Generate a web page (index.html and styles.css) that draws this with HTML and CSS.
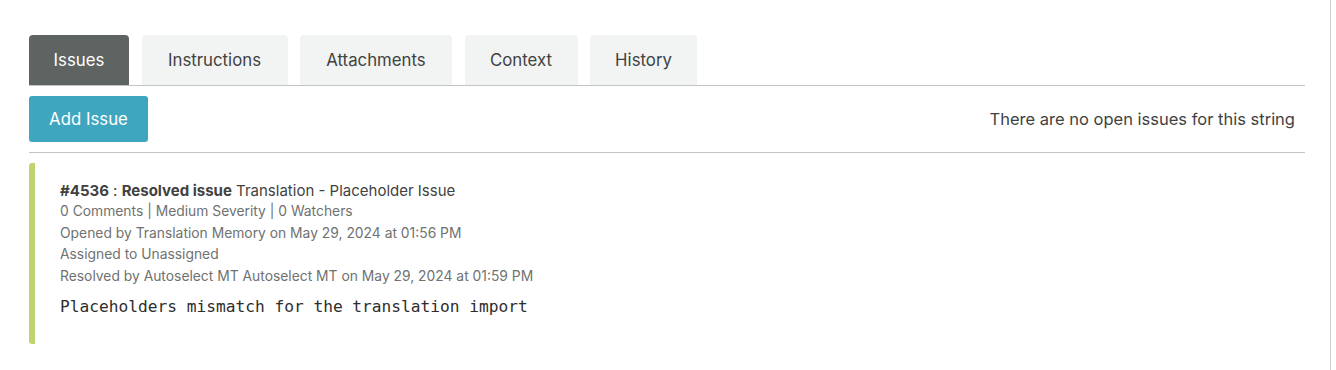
FILE: index.html
```html
<!DOCTYPE html>
<html>
<head>
<meta charset="utf-8">
<link rel="stylesheet" href="styles.css">
</head>
<body>
<div class="panel">
  <div class="tabs">
    <div class="tab active tab-issues">Issues</div>
    <div class="tab tab-instructions">Instructions</div>
    <div class="tab tab-attachments">Attachments</div>
    <div class="tab tab-context">Context</div>
    <div class="tab tab-history">History</div>
  </div>
  <div class="toolbar">
    <button class="add-btn">Add Issue</button>
    <div class="no-open">There are no open issues for this string</div>
  </div>
  <div class="issue">
    <div class="issue-title"><b>#4536</b> : <b>Resolved issue</b> Translation - Placeholder Issue</div>
    <div class="meta">0 Comments | Medium Severity | 0 Watchers</div>
    <div class="meta">Opened by Translation Memory on May 29, 2024 at 01:56 PM</div>
    <div class="meta">Assigned to Unassigned</div>
    <div class="meta">Resolved by Autoselect MT Autoselect MT on May 29, 2024 at 01:59 PM</div>
    <div class="desc">Placeholders mismatch for the translation import</div>
  </div>
</div>
</body>
</html>
```
FILE: styles.css
```css
html, body {
  margin: 0;
  padding: 0;
  background: #fff;
}
body {
  font-family: Inter, "Open Sans", sans-serif;
  color: #3f4241;
}
.panel {
  box-sizing: border-box;
  width: 1331px;
  height: 370px;
  padding: 35px 25px 0 29px;
  border-right: 1px solid #cfcfcf;
  overflow: hidden;
}
.tabs {
  display: flex;
  gap: 12.5px;
  border-bottom: 1px solid #c4c4c4;
  height: 50px;
}
.tab {
  height: 50px;
  box-sizing: border-box;
  background: #f2f3f3;
  border-radius: 4px 4px 0 0;
  display: flex;
  align-items: center;
  justify-content: center;
  font-size: 16.8px;
  color: #3f4241;
}
.tab.active {
  background: #5e6462;
  color: #fff;
}
.tab-issues { width: 100px; }
.tab-instructions { width: 146px; }
.tab-attachments { width: 152px; }
.tab-context { width: 113px; }
.tab-history { width: 107px; }
.toolbar {
  display: flex;
  align-items: center;
  justify-content: space-between;
  padding: 10px 10px 10px 0;
  border-bottom: 1px solid #c4c4c4;
}
.add-btn {
  font-family: inherit;
  width: 119px;
  height: 46px;
  background: #3fa6c0;
  color: #fff;
  border: none;
  border-radius: 3px;
  font-size: 16.8px;
  padding: 0;
}
.no-open {
  font-size: 16.5px;
  color: #3f4241;
}
.issue {
  margin-top: 10px;
  border-left: 6px solid #bed46f;
  border-radius: 3px;
  padding: 18px 0 0 25px;
  height: 163px;
}
.issue-title {
  font-size: 15px;
  color: #3f4241;
  line-height: 20px;
}
.issue-title b { font-weight: 700; }
.meta {
  font-size: 13.85px;
  color: #6f7271;
  line-height: 21.5px;
}
.desc {
  font-family: "DejaVu Sans Mono", monospace;
  font-size: 16.2px;
  color: #2d2d2d;
  margin-top: 10px;
  line-height: 20px;
}
```
